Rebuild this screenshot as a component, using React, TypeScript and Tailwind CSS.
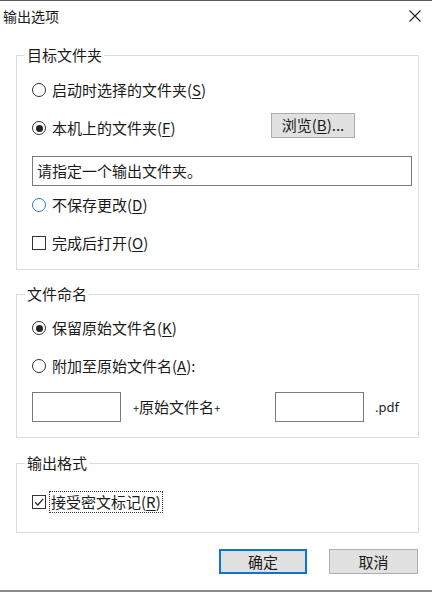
import React from "react";

const cjk = "font-['Noto_Sans_CJK_SC','Noto_Sans',sans-serif]";

function Radio({ checked = false, hover = false }: { checked?: boolean; hover?: boolean }) {
  return (
    <span
      className={`flex h-[14px] w-[14px] shrink-0 items-center justify-center rounded-full border bg-white ${
        hover ? "border-[#2a7bd0]" : "border-[#333]"
      }`}
    >
      {checked && <span className="h-[7px] w-[7px] rounded-full bg-[#222]" />}
    </span>
  );
}

function Check({ checked = false }: { checked?: boolean }) {
  return (
    <span className="flex h-[14px] w-[14px] shrink-0 items-center justify-center border border-[#333] bg-white">
      {checked && (
        <svg width="12" height="12" viewBox="0 0 12 12">
          <path d="M2 6.2 L4.8 9 L10.2 2.8" fill="none" stroke="#222" strokeWidth="1.2" />
        </svg>
      )}
    </span>
  );
}

function Key({ k }: { k: string }) {
  return (
    <>
      (<span className="underline underline-offset-2">{k}</span>)
    </>
  );
}

export default function App() {
  return (
    <div className={`relative flex h-[593px] w-[432px] flex-col overflow-hidden border-t border-[#5b5b5b] bg-white text-[15px] leading-[20px] text-[#1a1a1a] ${cjk}`}>
      {/* title bar */}
      <div className="flex h-[30px] items-center justify-between pl-[3px] pr-[11px]">
        <span className="text-[14px]">输出选项</span>
        <svg width="12" height="12" viewBox="0 0 12 12">
          <path d="M0.5 0.5 L11.5 11.5 M11.5 0.5 L0.5 11.5" stroke="#222" strokeWidth="1.1" />
        </svg>
      </div>

      {/* 目标文件夹 */}
      <fieldset className="ml-[16px] mt-[14px] w-[403px] border border-[#dcdcdc]">
        <legend className="ml-[8px] px-[2px]">目标文件夹</legend>
        <div className="pl-[15px] pr-[6px] pt-[6px] pb-[7px]">
          <label className="flex h-[38px] items-center gap-[6px]">
            <Radio />
            <span>
              启动时选择的文件夹<Key k="S" />
            </span>
          </label>
          <div className="flex h-[38px] items-center">
            <label className="flex items-center gap-[6px]">
              <Radio checked />
              <span>
                本机上的文件夹<Key k="F" />
              </span>
            </label>
            <button className="ml-auto mr-[57px] mb-[6px] h-[25px] w-[84px] border border-[#adadad] bg-[#e1e1e1] text-[15px]">
              浏览<Key k="B" />...
            </button>
          </div>
          <div className="mt-[9px] flex h-[30px] items-center border border-[#7a7a7a] px-[4px]">
            请指定一个输出文件夹。
          </div>
          <label className="flex h-[38px] items-center gap-[6px]">
            <Radio hover />
            <span>
              不保存更改<Key k="D" />
            </span>
          </label>
          <label className="flex h-[38px] items-center gap-[6px]">
            <Check />
            <span>
              完成后打开<Key k="O" />
            </span>
          </label>
        </div>
      </fieldset>

      {/* 文件命名 */}
      <fieldset className="ml-[16px] mt-[14px] w-[403px] border border-[#dcdcdc]">
        <legend className="ml-[8px] px-[2px]">文件命名</legend>
        <div className="pl-[15px] pt-[5px] pb-[15px]">
          <label className="flex h-[38px] items-center gap-[6px]">
            <Radio checked />
            <span>
              保留原始文件名<Key k="K" />
            </span>
          </label>
          <label className="flex h-[38px] items-center gap-[6px]">
            <Radio />
            <span>
              附加至原始文件名<Key k="A" />:
            </span>
          </label>
          <div className="mt-[7px] flex h-[30px] items-center">
            <div className="h-[30px] w-[89px] border border-[#7a7a7a]" />
            <span className="w-[154px] pl-[12px]">
              <span className="text-[11px]">+</span>原始文件名<span className="text-[11px]">+</span>
            </span>
            <div className="h-[30px] w-[89px] border border-[#7a7a7a]" />
            <span className="ml-[11px] font-['Noto_Sans',sans-serif] text-[13px]">.pdf</span>
          </div>
        </div>
      </fieldset>

      {/* 输出格式 */}
      <fieldset className="ml-[16px] mt-[15px] w-[403px] border border-[#dcdcdc]">
        <legend className="ml-[8px] px-[2px]">输出格式</legend>
        <div className="pl-[15px] pt-[10px] pb-[11px]">
          <label className="flex h-[38px] items-center gap-[3px]">
            <Check checked />
            <span className="border border-dotted border-[#333] px-[1px]">
              接受密文标记<Key k="R" />
            </span>
          </label>
        </div>
      </fieldset>

      {/* buttons */}
      <div className="mt-[16px] flex justify-end gap-[22px] pr-[14px]">
        <button className="h-[25px] w-[88px] border-2 border-[#0a74d8] bg-[#e1e1e1] text-[15px]">确定</button>
        <button className="h-[25px] w-[89px] border border-[#adadad] bg-[#e1e1e1] text-[15px]">取消</button>
      </div>

      <div className="mb-[1px] mt-auto h-[2px] w-full bg-[#8a8a8a]" />
    </div>
  );
}
